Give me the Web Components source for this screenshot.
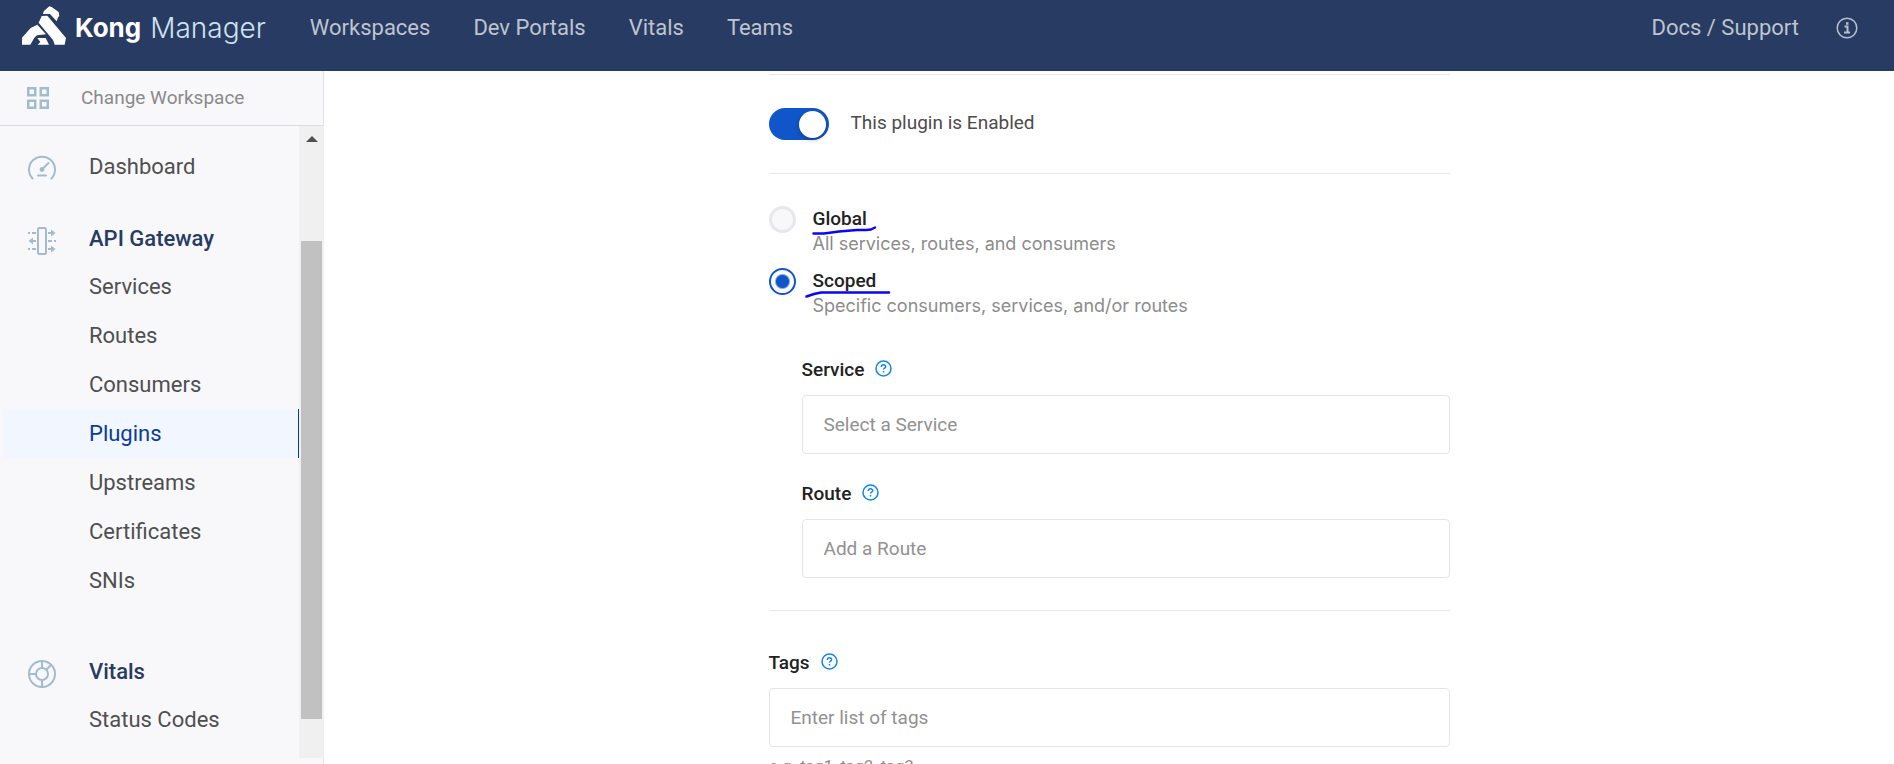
<!DOCTYPE html>
<html lang="en">
<head>
<meta charset="utf-8">
<title>Kong Manager</title>
<style>
  body { margin: 0; font-family: Roboto, "Liberation Sans", sans-serif; color: #4c4c4c; background: #fff; }
</style>
</head>
<body>
<kong-app>
  <top-bar slot="header">
    <nav-link href="#workspaces">Workspaces</nav-link>
    <nav-link href="#portals">Dev Portals</nav-link>
    <nav-link href="#vitals">Vitals</nav-link>
    <nav-link href="#teams">Teams</nav-link>
    <nav-link slot="end" href="#docs">Docs / Support</nav-link>
  </top-bar>
  <side-bar slot="side">
    <side-section icon="gauge">
      <side-item slot="title" href="#dashboard">Dashboard</side-item>
    </side-section>
    <side-section icon="gateway">
      <side-item slot="title" heading href="#gateway">API Gateway</side-item>
      <side-item href="#services">Services</side-item>
      <side-item href="#routes">Routes</side-item>
      <side-item href="#consumers">Consumers</side-item>
      <side-item href="#plugins" current>Plugins</side-item>
      <side-item href="#upstreams">Upstreams</side-item>
      <side-item href="#certificates">Certificates</side-item>
      <side-item href="#snis">SNIs</side-item>
    </side-section>
    <side-section icon="wheel" spaced>
      <side-item slot="title" heading href="#vitals">Vitals</side-item>
      <side-item href="#status">Status Codes</side-item>
    </side-section>
  </side-bar>
  <plugin-form>
    <form-block compact><toggle-switch>This plugin is Enabled</toggle-switch></form-block>
    <form-block compact>
      <scope-picker></scope-picker>
      <field-group>
        <text-field label="Service" placeholder="Select a Service"></text-field>
        <text-field label="Route" placeholder="Add a Route"></text-field>
      </field-group>
    </form-block>
    <form-block>
      <text-field label="Tags" placeholder="Enter list of tags" hint="e.g. tag1, tag2, tag3"></text-field>
    </form-block>
  </plugin-form>
</kong-app>

<script>
const define = (name, markup, setup) => {
  const template = document.createElement('template');
  template.innerHTML = '<style>*{box-sizing:border-box}</style>' + markup;
  customElements.define(name, class extends HTMLElement {
    constructor() {
      super();
      this.attachShadow({ mode: 'open' }).append(template.content.cloneNode(true));
    }
    connectedCallback() { if (setup) setup(this, this.shadowRoot); }
  });
};

const icons = {
  gauge: `<svg width="28" height="28" viewBox="0 0 28 28" fill="none" stroke="#a3bbce" stroke-width="2" stroke-linecap="round"><path d="M4.500 23.500A13 13 0 1 1 23.500 23.500"/><path d="M10 20.500h8M15 13.500l5.500-5.500"/><circle cx="14" cy="14.500" r="2.400" fill="#a3bbce" stroke="none"/></svg>`,
  gateway: `<svg width="28" height="28" viewBox="0 0 28 28" fill="none" stroke="#a3bbce" stroke-width="2"><rect x="10" y="1" width="8" height="26" rx="1.500"/><path d="M0 6h2M4 6h4M0 22h2M4 22h4M20 6h4M20 22h4M4 14h4M20 14h4M26 14h2"/><path d="M23 2.500L27.500 6 23 9.500zM23 18.500l4.500 3.500L23 25.500zM5 10.500L.5 14 5 17.500z" fill="#a3bbce" stroke="none"/></svg>`,
  wheel: `<svg width="28" height="28" viewBox="0 0 28 28" fill="none" stroke="#a3bbce" stroke-width="2"><circle cx="14" cy="14" r="13"/><circle cx="14" cy="14" r="6"/><path d="M14 1v7M14 20v7M1 14h7M18 10l4.500-4.500"/></svg>`
};

define('kong-app', `
  <style>
    :host { display: grid; grid-template: auto minmax(0, 1fr) / 324px minmax(0, 1fr); height: 100vh; }
    ::slotted([slot=header]) { grid-column: 1 / -1; }
    main { overflow-y: auto; scrollbar-width: none; }
  </style>
  <slot name="header"></slot>
  <slot name="side"></slot>
  <main><slot></slot></main>`);

define('top-bar', `
  <style>
    :host { display: block; background: #283b62; }
    header { display: flex; align-items: center; height: 71px; padding: 0 36px 16px 22px; }
    .brand { display: flex; align-items: center; text-decoration: none; color: #fff; font: 700 26px/32px Inter, sans-serif; margin-right: 44px; }
    .brand svg { margin: 0 9px 4px 0; }
    .brand span { font-weight: 300; color: #cfe2f3; margin-left: 9px; font-size: 28px; }
    nav { display: flex; gap: 43px; }
    .end { display: flex; align-items: center; gap: 37px; margin-left: auto; }
    button { display: flex; border: 0; padding: 0; background: none; }
  </style>
  <header>
    <a class="brand" href="#home">
      <svg width="44" height="39" viewBox="66 19 132 117" fill="#fff" aria-hidden="true">
        <path d="M131 35L148 20l7 2 21 15 2 11-5 8-3 9-20-22h-21z"/>
        <path d="M125 49l17-1 56 67-4 20h-30l-5-14-43-52z"/>
        <path d="M66 135v-21l26-29 20-10 26 29-27 3-8 7-12 21z"/>
        <path d="M112 115h25l10 20h-34l8-8z"/>
      </svg>
      Kong<span>Manager</span>
    </a>
    <nav aria-label="Main"><slot></slot></nav>
    <div class="end">
      <slot name="end"></slot>
      <button type="button" aria-label="Information">
        <svg width="22" height="22" viewBox="0 0 22 22" fill="none" stroke="#b9c0cc" stroke-width="1.500"><circle cx="11" cy="11" r="9.800"/><path d="M8.500 9.500h3v6M8 15.500h6" stroke-width="2"/><path d="M10 6.500h2.500" stroke-width="2.500"/></svg>
      </button>
    </div>
  </header>`);

define('nav-link', `
  <style>
    :host { display: block; }
    a { color: #bec4d0; text-decoration: none; font-size: 22px; line-height: 32px; white-space: nowrap; }
  </style>
  <a><slot></slot></a>`, (el, root) => { root.querySelector('a').href = el.getAttribute('href'); });

define('side-bar', `
  <style>
    :host { display: flex; flex-direction: column; min-height: 0; background: #f8f8fb; border-right: 1px solid #e0e1e6; }
    .change { display: flex; align-items: center; gap: 32px; flex: none; height: 55px; padding: 0 27px 1px; border-bottom: 1px solid #dcdde2; color: #8a8a8a; font-size: 19px; text-decoration: none; }
    .body { display: flex; flex: 1; min-height: 0; margin-bottom: 6px; }
    nav { flex: 1; overflow: hidden; padding-top: 17px; }
    .bar { display: flex; flex-direction: column; width: 25px; margin-right: -1px; background: #f0f0f0; padding: 10px 2px 39px; }
    .up { align-self: center; border: 6px solid transparent; border-top: 0; border-bottom-color: #505050; }
    .thumb { flex: 1; margin-top: 99px; background: #c1c1c1; }
  </style>
  <a class="change" href="#change">
    <svg width="22" height="22" viewBox="0 0 22 22" fill="none" stroke="#a3bbce" stroke-width="2.500"><rect x="1.250" y="1.250" width="7" height="7"/><rect x="13.750" y="1.250" width="7" height="7"/><rect x="1.250" y="13.750" width="7" height="7"/><rect x="13.750" y="13.750" width="7" height="7"/></svg>
    Change Workspace
  </a>
  <div class="body">
    <nav aria-label="Workspace"><slot></slot></nav>
    <div class="bar" aria-hidden="true"><div class="up"></div><div class="thumb"></div></div>
  </div>`);

define('side-section', `
  <style>
    :host { display: block; margin-bottom: 25px; }
    :host([spaced]) { margin-top: 43px; }
    .head { display: flex; align-items: center; }
    .icon { display: flex; width: 90px; margin: 4px -90px 0 0; padding-left: 28px; }
    ::slotted([slot=title]) { flex: 1; --row: 47px; }
  </style>
  <div class="head"><div class="icon"></div><slot name="title"></slot></div>
  <slot></slot>`, (el, root) => { root.querySelector('.icon').innerHTML = icons[el.getAttribute('icon')]; });

define('side-item', `
  <style>
    :host { display: block; }
    a { display: block; padding-left: 86px; margin-left: 3px; color: #4f4f4f; font-size: 22px; line-height: var(--row, 49px); text-decoration: none; }
    :host([heading]) a { color: #283b62; font-weight: 500; }
    :host([current]) a { color: #0a3c9c; background: #f2f6fe; border-right: 1px solid #0a3c9c; }
  </style>
  <a><slot></slot></a>`, (el, root) => { root.querySelector('a').href = el.getAttribute('href'); });

define('plugin-form', `
  <style>
    :host { display: block; max-width: 681px; margin: 0 auto; padding: 3px 0 24px; }
  </style>
  <form><slot></slot></form>`);

define('form-block', `
  <style>
    :host { display: block; border-top: 1px solid #e7e8ec; padding: 36px 0; }
    :host([compact]) { padding: 32px 0; }
  </style>
  <slot></slot>`);

define('toggle-switch', `
  <style>
    :host { display: block; }
    label { display: flex; align-items: flex-start; gap: 22px; height: 34px; color: #4c4c4c; font-size: 19px; line-height: 32px; }
    input { appearance: none; flex: none; width: 60px; height: 32px; margin: 1px 0 0; padding: 2px 3px; border-radius: 16px; background: #1155cb; display: flex; justify-content: flex-end; align-items: center; }
    input::before { content: ""; width: 27px; height: 27px; border-radius: 50%; background: #fff; box-shadow: 0 2px 4px #0004; }
    input:not(:checked) { background: #c8ccd4; justify-content: flex-start; }
  </style>
  <label><input type="checkbox" role="switch" checked><slot></slot></label>`);

define('scope-picker', `
  <style>
    :host { display: block; }
    label { display: grid; grid-template: 25px 25px / 27px 1fr; column-gap: 17px; height: 62px; font-size: 19px; line-height: 25px; }
    input { appearance: none; grid-row: span 2; width: 27px; height: 27px; margin: 0; border: 3px solid #e7e7ec; border-radius: 50%; background: #f8f8fb; }
    input:checked { border: 2px solid #1155cb; background: radial-gradient(circle, #1155cb 6px, #fff 8px); }
    b { position: relative; justify-self: start; font-weight: 500; color: #222; }
    small { font-family: Inter, sans-serif; font-size: 18px; color: #8c8c8c; }
    svg { position: absolute; left: -8px; top: 16px; overflow: visible; fill: none; stroke: #0a06f5; stroke-width: 2.500; stroke-linecap: round; stroke-linejoin: round; }
  </style>
  <label><input type="radio" name="scope"><b>Global<svg width="84" height="12" aria-hidden="true"><path d="M8.500 11.500H19L34 9.500 52 8H61L66 7.500 70 5.500"/></svg></b><small>All services, routes, and consumers</small></label>
  <label><input type="radio" name="scope" checked><b>Scoped<svg width="84" height="12" aria-hidden="true"><path d="M1.500 12.500L9 10 16 8.500H84"/></svg></b><small>Specific consumers, services, and/or routes</small></label>`);

define('field-group', `
  <style>
    :host { display: grid; gap: 24px; padding: 24px 0 0 33px; }
  </style>
  <slot></slot>`);

define('text-field', `
  <style>
    :host { display: block; }
    .row { display: flex; align-items: center; gap: 11px; height: 32px; }
    label { color: #222; font-size: 19px; font-weight: 500; line-height: 32px; }
    button { display: flex; border: 0; padding: 0; margin-bottom: 4px; background: none; }
    input { display: block; width: 100%; height: 59px; margin-top: 9px; padding: 0 21px; border: 1px solid #e4e5ea; border-radius: 4px; background: #fff; font: inherit; font-size: 19px; color: #333; }
    input::placeholder { color: #919191; opacity: 1; }
    p { margin: 7px 0 0; color: #8c8c8c; font-size: 17px; font-style: italic; line-height: 24px; }
  </style>
  <div class="row">
    <label for="control"></label>
    <button type="button" aria-label="Help">
      <svg width="17" height="17" viewBox="0 0 17 17" fill="none" stroke="#1188e6" stroke-width="1.500"><circle cx="8.500" cy="8.500" r="7.500"/><path d="M6.300 7c0-3 4.600-2.800 4.400-.2 0 1.200-2.200 1.400-2.200 2.700M8.500 11v1.500"/></svg>
    </button>
  </div>
  <input id="control" type="text">`, (el, root) => {
    root.querySelector('label').textContent = el.getAttribute('label');
    root.querySelector('input').placeholder = el.getAttribute('placeholder');
    if (el.hasAttribute('hint')) {
      const hint = document.createElement('p');
      hint.textContent = el.getAttribute('hint');
      root.append(hint);
    }
  });
</script>
</body>
</html>
